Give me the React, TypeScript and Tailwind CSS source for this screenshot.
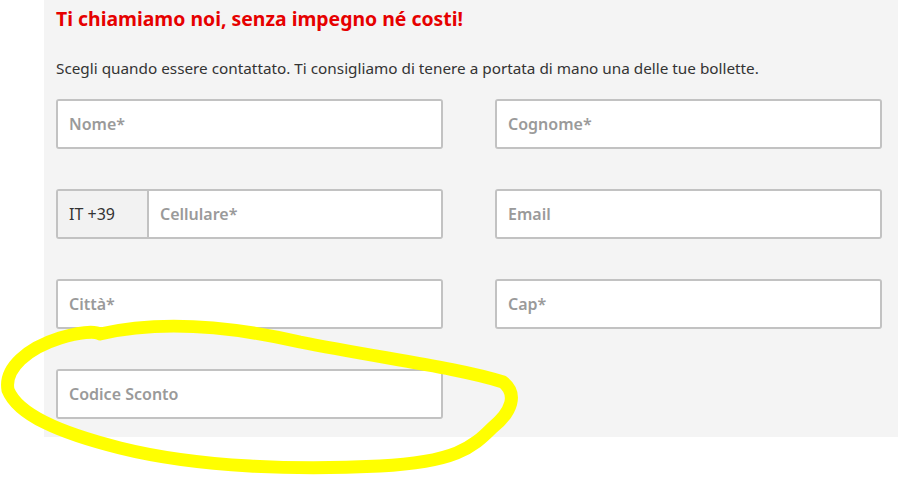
import React from "react";

const fields: { label: string; prefix?: string }[] = [
  { label: "Nome*" },
  { label: "Cognome*" },
  { label: "Cellulare*", prefix: "IT +39" },
  { label: "Email" },
  { label: "Città*" },
  { label: "Cap*" },
  { label: "Codice Sconto" },
];

function Field({ label, prefix }: { label: string; prefix?: string }) {
  return (
    <div className="flex h-[50px] w-[387px] overflow-hidden rounded-[3px] border-2 border-[#c2c2c2] bg-white">
      {prefix && (
        <div className="flex w-[91px] items-center border-r-2 border-[#c2c2c2] bg-[#f2f2f2] pl-[11px] text-[16px] text-[#333]">
          {prefix}
        </div>
      )}
      <input
        placeholder={label}
        className="h-full flex-1 bg-white pl-[11px] text-[16px] font-semibold text-[#333] outline-none placeholder:text-[#9a9a9a]"
      />
    </div>
  );
}

export default function App() {
  return (
    <div className="relative h-[480px] w-[907px] bg-white font-['Noto_Sans',sans-serif]">
      <div className="ml-[44px] h-[437px] w-[854px] bg-[#f4f4f4] pl-3 pt-[3px]">
        <h1 className="text-[19.4px] font-bold leading-[32px] text-[#e60000]">
          Ti chiamiamo noi, senza impegno né costi!
        </h1>
        <p className="mt-[23px] text-[15.3px] leading-[20px] text-[#333]">
          Scegli quando essere contattato. Ti consigliamo di tenere a portata di mano una delle tue bollette.
        </p>
        <div className="mt-[21px] grid grid-cols-[387px_387px] gap-x-[52px] gap-y-[40px]">
          {fields.map((f) => (
            <Field key={f.label} label={f.label} prefix={f.prefix} />
          ))}
        </div>
      </div>

      {/* hand-drawn highlight */}
      <svg className="pointer-events-none absolute left-0 top-0" width="907" height="480">
        <path
          d="M100 334 C 160 320, 230 326, 300 342 C 380 358, 460 368, 503 382 C 518 394, 512 412, 492 428 C 472 448, 455 462, 380 466 C 300 470, 200 468, 120 448 C 60 433, 18 415, 8 390 C 4 368, 28 348, 60 338 C 80 332, 95 331, 100 334"
          fill="none"
          stroke="#ffff00"
          strokeWidth="13"
          strokeLinecap="round"
          strokeLinejoin="round"
        />
      </svg>
    </div>
  );
}
